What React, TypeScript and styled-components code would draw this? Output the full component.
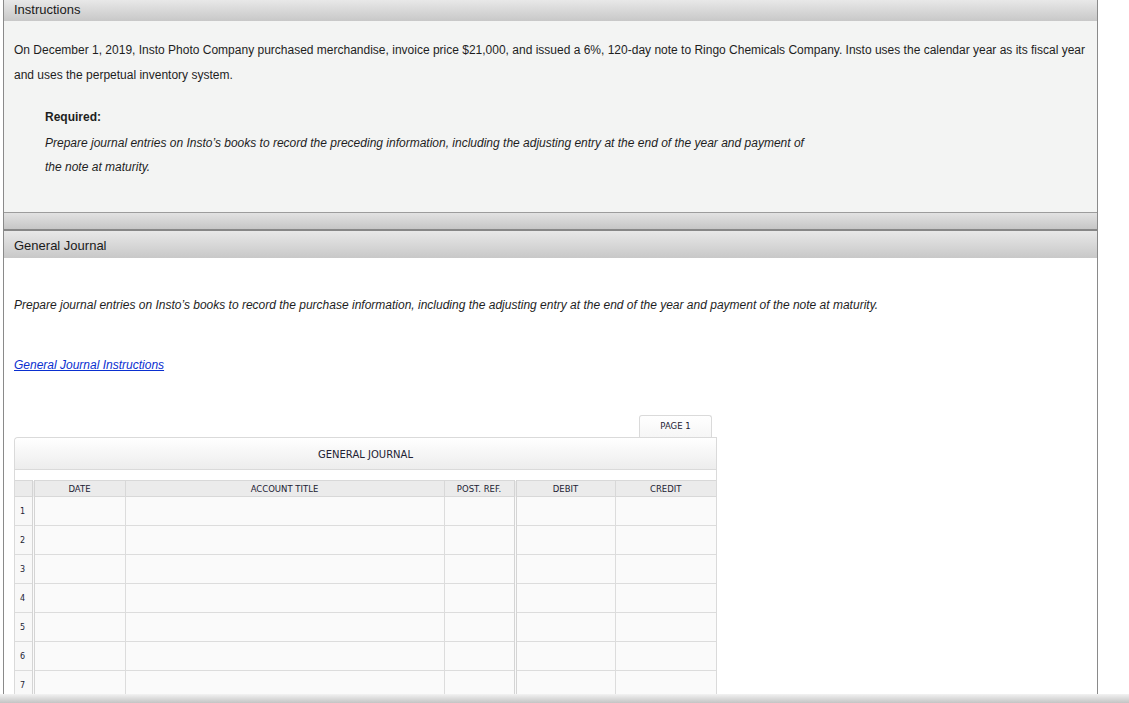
import React from "react";
import styled, { createGlobalStyle } from "styled-components";

const GlobalStyle = createGlobalStyle`
  html, body {
    margin: 0;
    padding: 0;
    background: #ffffff;
  }
  body {
    font-family: "Liberation Sans", Arial, sans-serif;
    color: #1e1e1e;
  }
`;

const Page = styled.div`
  width: 1129px;
  height: 703px;
  display: flex;
  flex-direction: column;
  overflow: hidden;
`;

const Frame = styled.div`
  flex: none;
  margin-left: 3px;
  width: 1093px;
  height: 694px;
  border-left: 1px solid #8a8a8a;
  border-right: 1px solid #8a8a8a;
  overflow: hidden;
`;

const BottomBar = styled.div`
  flex: 1;
  background: linear-gradient(#f2f2f2, #c4c4c4);
`;

const PanelHeader = styled.div<{ $tall?: boolean }>`
  height: ${(p) => (p.$tall ? 27 : 21)}px;
  line-height: ${(p) => (p.$tall ? 29 : 20)}px;
  padding-left: 10px;
  font-size: 13px;
  color: #1a1a1a;
  background: linear-gradient(#e8e8e8, #c8c8c8);
`;

const InstructionsBody = styled.div`
  background: #f3f4f3;
  padding: 17px 10px 33px;
`;

const Paragraph = styled.p`
  margin: 0;
  font-size: 12px;
  line-height: 25px;
`;

const Required = styled.div`
  margin: 17px 0 0 31px;
  width: 768px;
`;

const RequiredLabel = styled.div`
  font-size: 12px;
  font-weight: bold;
  line-height: 24px;
`;

const Italic = styled.p<{ $gap?: number }>`
  margin: ${(p) => p.$gap ?? 0}px 0 0;
  font-size: 12px;
  font-style: italic;
  line-height: 24px;
`;

const Divider = styled.div`
  height: 16px;
  border-top: 1px solid #9c9c9c;
  border-bottom: 2px solid #878787;
  background: linear-gradient(#e2e2e2, #c6c6c6);
`;

const JournalBody = styled.div`
  background: #ffffff;
  padding: 35px 10px 0;
`;

const HelpLink = styled.a`
  display: block;
  margin-top: 36px;
  font-size: 12px;
  font-style: italic;
  line-height: 24px;
  color: #0a2fd0;
  text-decoration: underline;
`;

const JournalWrap = styled.div`
  margin-top: 38px;
  width: 703px;
  font-family: "DejaVu Sans", Tahoma, sans-serif;
  color: #222233;
`;

const TabRow = styled.div`
  display: flex;
  justify-content: flex-end;
  padding-right: 5px;
`;

const PageTab = styled.div`
  width: 71px;
  height: 21px;
  line-height: 21px;
  text-align: center;
  font-size: 8.5px;
  border: 1px solid #dadada;
  border-bottom: none;
  border-radius: 3px 3px 0 0;
  background: linear-gradient(#ffffff, #f6f6f6);
`;

const JournalBox = styled.div`
  border: 1px solid #dadada;
  border-bottom: none;
  border-radius: 4px 0 0 0;
  background: #ffffff;
`;

const JournalTitle = styled.div`
  height: 31px;
  line-height: 33px;
  text-align: center;
  font-size: 10px;
  border-bottom: 1px solid #dadada;
  background: linear-gradient(#ffffff, #ededed);
  border-radius: 4px 0 0 0;
`;

const Spacer = styled.div`
  height: 10px;
`;

const Table = styled.table`
  width: 100%;
  border-collapse: collapse;
  table-layout: fixed;
`;

const HeadCell = styled.th<{ $double?: boolean }>`
  height: 15px;
  padding: 0;
  font-size: 8.5px;
  font-weight: normal;
  text-align: center;
  background: #ebebeb;
  border-top: 1px solid #d8d8d8;
  border-bottom: 1px solid #d8d8d8;
  border-right: ${(p) => (p.$double ? "3px double #d4d4d4" : "1px solid #d8d8d8")};
  &:last-child {
    border-right: none;
  }
`;

const NumCell = styled.td`
  height: 28px;
  padding: 0 0 0 5px;
  font-size: 8px;
  background: #f8f8f8;
  border-bottom: 1px solid #dcdcdc;
  border-right: 3px double #d4d4d4;
`;

const Cell = styled.td<{ $double?: boolean }>`
  height: 28px;
  padding: 0;
  background: #fafafa;
  border-bottom: 1px solid #dcdcdc;
  border-right: ${(p) => (p.$double ? "3px double #d4d4d4" : "1px solid #dcdcdc")};
  &:last-child {
    border-right: none;
  }
`;

const columns = [
  { label: "", width: 18, double: true },
  { label: "DATE", width: 92 },
  { label: "ACCOUNT TITLE", width: 319 },
  { label: "POST. REF.", width: 71, double: true },
  { label: "DEBIT", width: 100 },
  { label: "CREDIT", width: 101 },
];

const rows = [1, 2, 3, 4, 5, 6, 7];

export default function App() {
  return (
    <>
      <GlobalStyle />
      <Page>
        <Frame>
          <PanelHeader>Instructions</PanelHeader>
          <InstructionsBody>
            <Paragraph>
              On December 1, 2019, Insto Photo Company purchased merchandise, invoice price $21,000, and
              issued a 6%, 120-day note to Ringo Chemicals Company. Insto uses the calendar year as its
              fiscal year and uses the perpetual inventory system.
            </Paragraph>
            <Required>
              <RequiredLabel>Required:</RequiredLabel>
              <Italic $gap={2}>
                Prepare journal entries on Insto’s books to record the preceding information, including the
                adjusting entry at the end of the year and payment of the note at maturity.
              </Italic>
            </Required>
          </InstructionsBody>
          <Divider />
          <PanelHeader $tall>General Journal</PanelHeader>
          <JournalBody>
            <Italic>
              Prepare journal entries on Insto’s books to record the purchase information, including the
              adjusting entry at the end of the year and payment of the note at maturity.
            </Italic>
            <HelpLink href="#">General Journal Instructions</HelpLink>
            <JournalWrap>
              <TabRow>
                <PageTab>PAGE 1</PageTab>
              </TabRow>
              <JournalBox>
                <JournalTitle>GENERAL JOURNAL</JournalTitle>
                <Spacer />
                <Table>
                  <colgroup>
                    {columns.map((c, i) => (
                      <col key={i} style={{ width: c.width }} />
                    ))}
                  </colgroup>
                  <thead>
                    <tr>
                      {columns.map((c, i) => (
                        <HeadCell key={i} $double={c.double}>
                          {c.label}
                        </HeadCell>
                      ))}
                    </tr>
                  </thead>
                  <tbody>
                    {rows.map((n) => (
                      <tr key={n}>
                        <NumCell>{n}</NumCell>
                        <Cell />
                        <Cell />
                        <Cell $double />
                        <Cell />
                        <Cell />
                      </tr>
                    ))}
                  </tbody>
                </Table>
              </JournalBox>
            </JournalWrap>
          </JournalBody>
        </Frame>
        <BottomBar />
      </Page>
    </>
  );
}
